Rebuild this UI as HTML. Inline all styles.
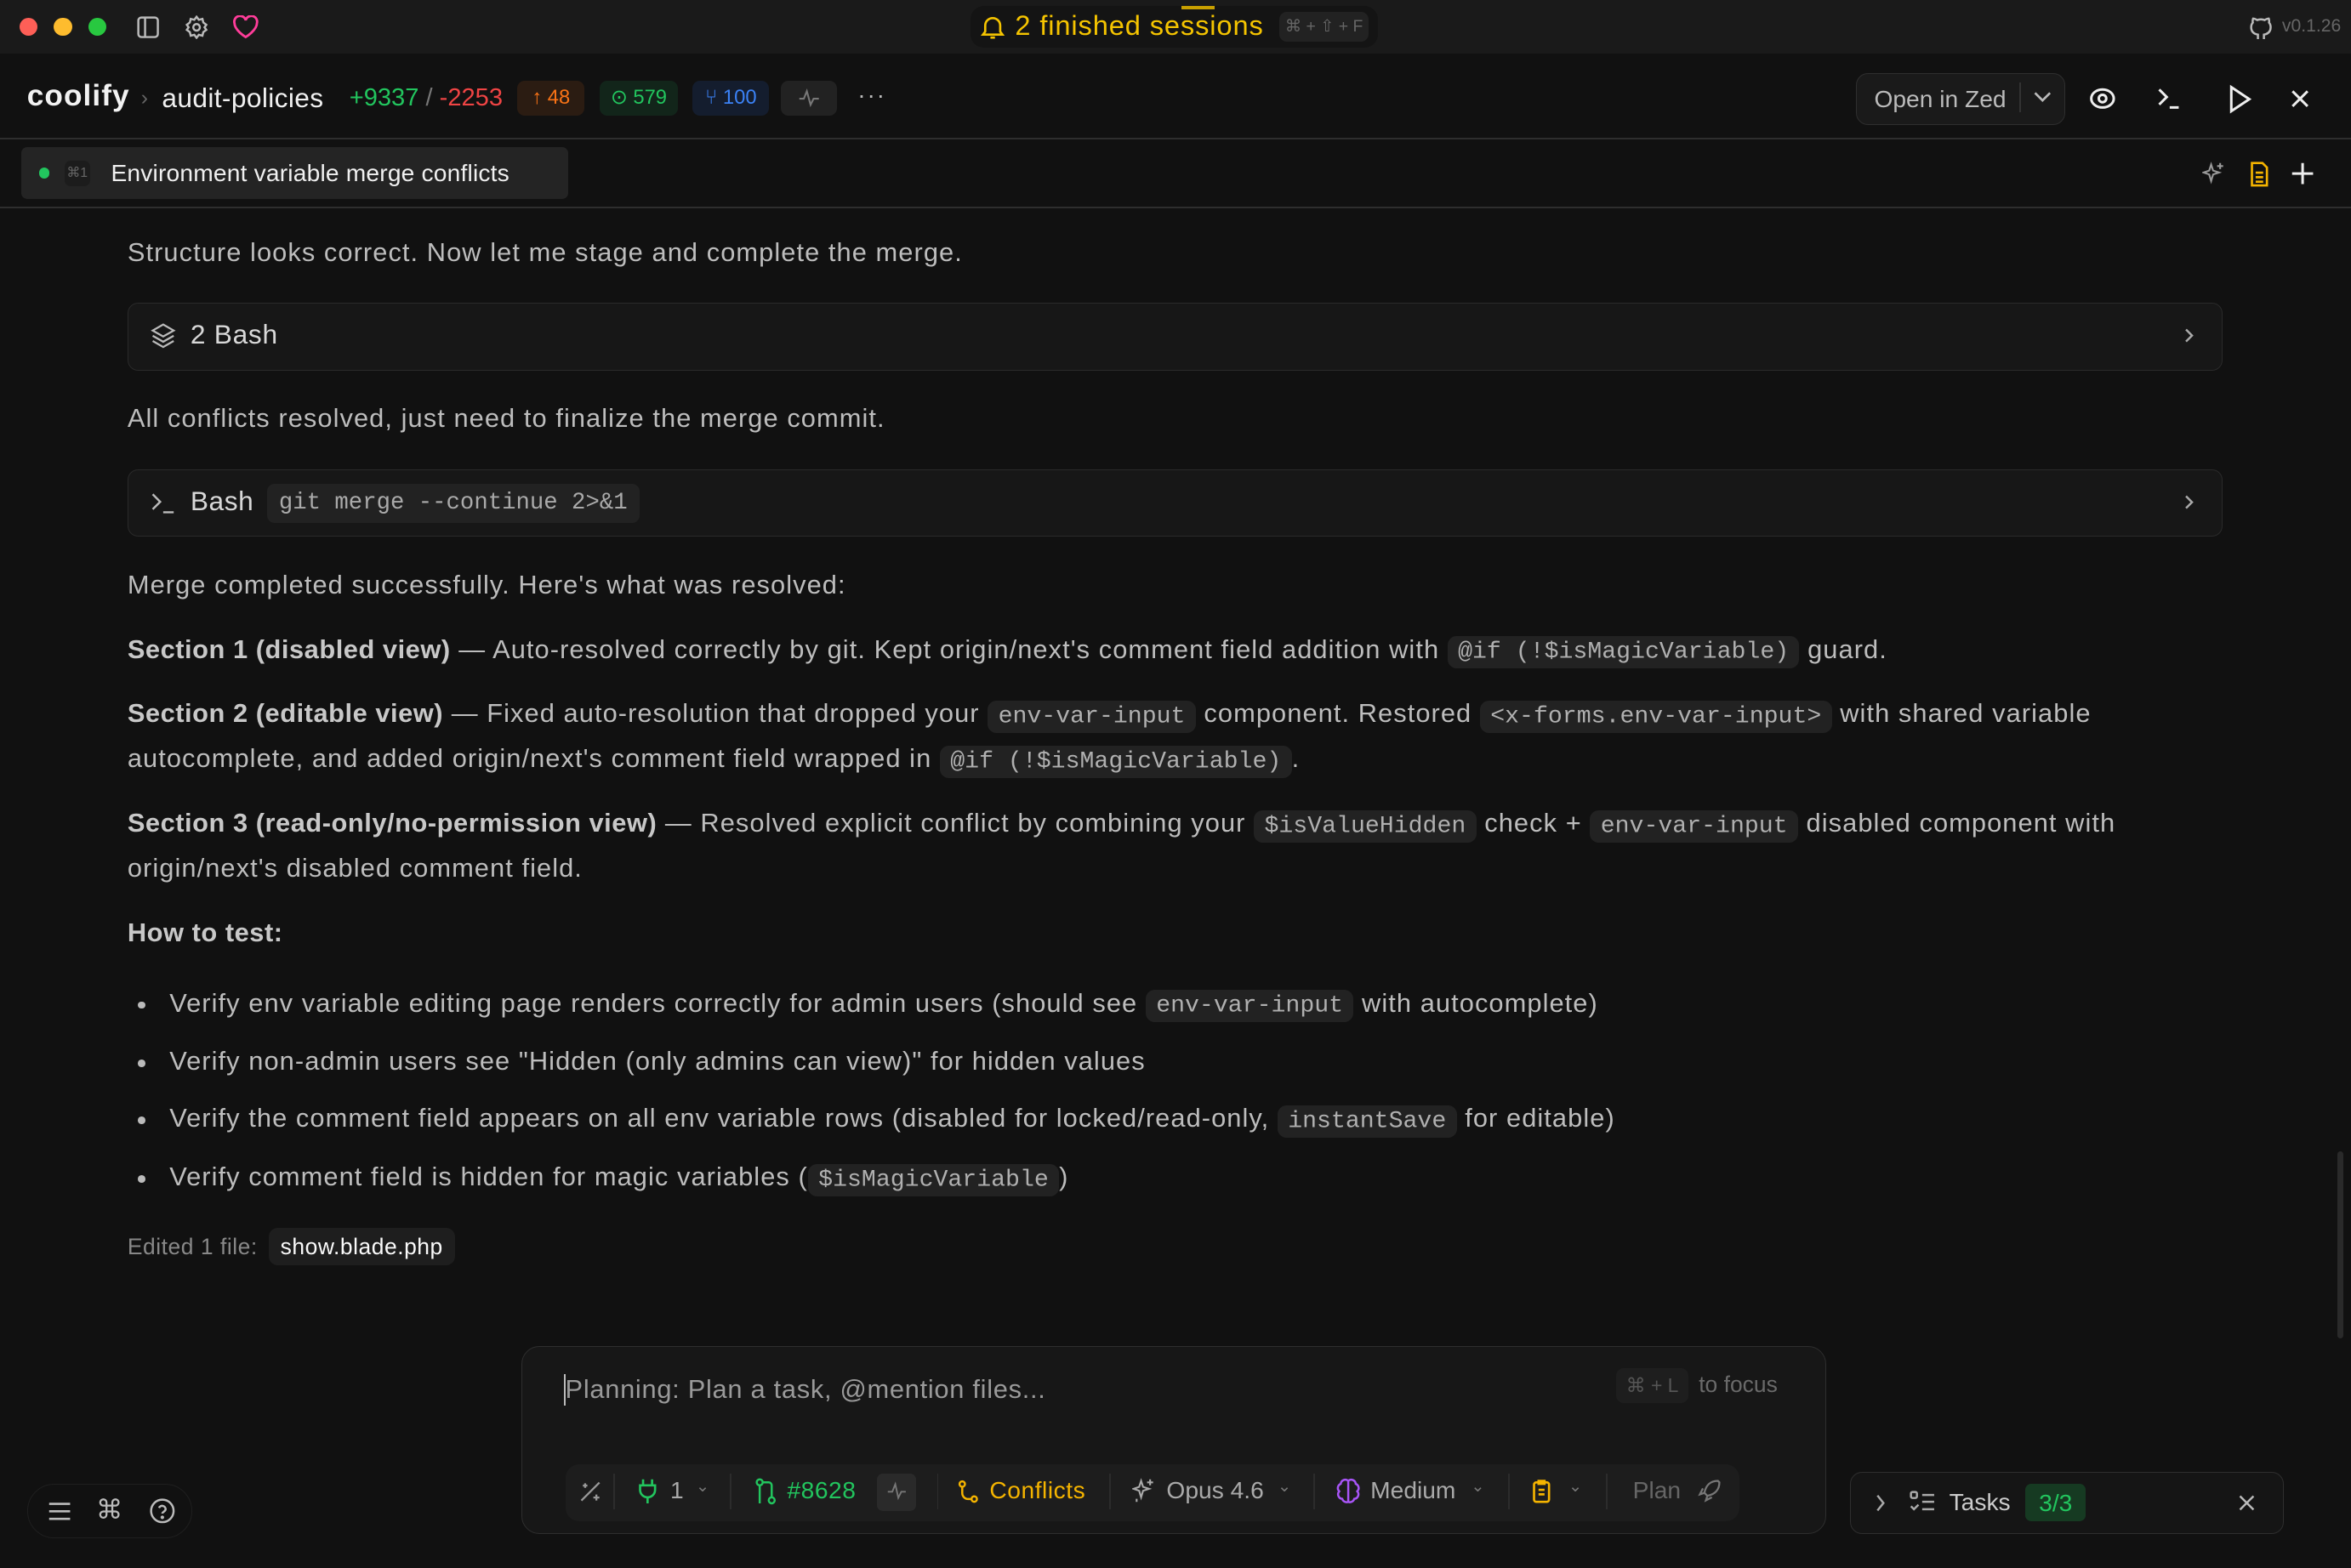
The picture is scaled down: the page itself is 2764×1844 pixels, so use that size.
<!DOCTYPE html>
<html><head><meta charset="utf-8"><style>
html,body{margin:0;padding:0;background:#111;overflow:hidden;width:2764px;height:1844px}
#w{zoom:1.76276;width:1568px;height:1046px;position:relative;font-family:"Liberation Sans",sans-serif;color:#bdbdbd}
.a{position:absolute;white-space:nowrap}
.p{position:absolute;left:85px;font-size:17.5px;color:#bdbdbd;white-space:nowrap;letter-spacing:0.6px}
.p b{color:#c8c8c8;font-weight:bold;letter-spacing:0.3px}
code{font-family:"Liberation Mono",monospace;font-size:16px;background:#222;border-radius:6px;padding:2px 7px;color:#b0b0b0;letter-spacing:0}
.card{position:absolute;left:85px;width:1396px;height:44px;border:1px solid #2a2a2a;border-radius:7px;background:#171717}
.li{position:absolute;left:92px;font-size:17.5px;color:#bdbdbd;white-space:nowrap;letter-spacing:0.6px}
.li::before{content:"";position:absolute;left:0;top:9px;width:5px;height:5px;border-radius:50%;background:#bbb}
.li span.t{margin-left:21px}
</style></head><body><div id="w">
<!-- title bar -->
<div class="a" style="left:0;top:0;width:1568px;height:36px;background:#1a1a1a"></div>
<div class="a" style="left:13px;top:12px;width:12px;height:12px;border-radius:50%;background:#fe5f57"></div>
<div class="a" style="left:36px;top:12px;width:12px;height:12px;border-radius:50%;background:#febc2e"></div>
<div class="a" style="left:59px;top:12px;width:12px;height:12px;border-radius:50%;background:#28c840"></div>
<svg class="a" style="left:91px;top:10px" width="16" height="16" viewBox="0 0 16 16" fill="none" stroke="#bbb" stroke-width="1.4"><rect x="1.5" y="1.5" width="13" height="13" rx="2"/><line x1="6" y1="1.5" x2="6" y2="14.5"/></svg>
<svg class="a" style="left:123px;top:10px" width="16" height="16" viewBox="0 0 16 16" fill="none" stroke="#bbb" stroke-width="1.4"><circle cx="8" cy="8" r="2.2"/><path d="M8 1l1.5 2 2.4-.6.6 2.4 2 1.5-1.2 1.7 1.2 1.7-2 1.5-.6 2.4-2.4-.6L8 15l-1.5-2-2.4.6-.6-2.4-2-1.5L2.7 8 1.5 6.3l2-1.5.6-2.4 2.4.6z"/></svg>
<svg class="a" style="left:155px;top:10px" width="18" height="16" viewBox="0 0 18 16" fill="none" stroke="#ff3d9a" stroke-width="1.6"><path d="M9 14.5S1.5 10 1.5 5.2A3.7 3.7 0 0 1 9 3.3a3.7 3.7 0 0 1 7.5 1.9C16.5 10 9 14.5 9 14.5z"/></svg>
<div class="a" style="left:647px;top:4px;width:272px;height:28px;border-radius:9px;background:#141414"></div>
<div class="a" style="left:788px;top:4px;width:22px;height:2px;background:#c9a000"></div>
<svg class="a" style="left:654px;top:9px" width="16" height="18" viewBox="0 0 16 18" fill="none" stroke="#f5c400" stroke-width="1.5"><path d="M3 12V8a5 5 0 0 1 10 0v4l1.5 2h-13z"/><path d="M6.5 16h3"/></svg>
<div class="a" style="left:677px;top:6px;font-size:18.5px;color:#f5c400;letter-spacing:0.5px">2 finished sessions</div>
<div class="a" style="left:853px;top:8px;width:60px;height:20px;border-radius:5px;background:#222;color:#666;font-size:11px;line-height:20px;text-align:center">⌘ + ⇧ + F</div>
<svg class="a" style="left:1500px;top:9px" width="16" height="18" viewBox="0 0 16 18" fill="none" stroke="#bbb" stroke-width="1.4"><path d="M6 17v-3c-3-.5-4.5-2-4.5-5 0-1.2.4-2.2 1.1-3-.2-.8-.1-1.8.2-2.7 1 0 1.9.5 2.7 1a7 7 0 0 1 5 0c.8-.5 1.7-1 2.7-1 .3.9.4 1.9.2 2.7.7.8 1.1 1.8 1.1 3 0 3-1.5 4.5-4.5 5v3"/></svg>
<div class="a" style="left:1522px;top:11px;font-size:12px;color:#666">v0.1.26</div>
<!-- header -->
<div class="a" style="left:18px;top:53px;font-size:20px;font-weight:bold;color:#f2f2f2;letter-spacing:0.6px">coolify</div>
<div class="a" style="left:94px;top:58px;font-size:14px;color:#666">›</div>
<div class="a" style="left:108px;top:55px;font-size:18px;color:#f0f0f0;letter-spacing:0.2px">audit-policies</div>
<div class="a" style="left:233px;top:56px;font-size:16.5px"><span style="color:#22c55e">+9337</span><span style="color:#777"> / </span><span style="color:#ef4444">-2253</span></div>
<div class="a" style="left:345px;top:54px;width:45px;height:23px;border-radius:5px;background:#2b1c12;color:#f97316;font-size:13.5px;line-height:23px;text-align:center">↑ 48</div>
<div class="a" style="left:400px;top:54px;width:52px;height:23px;border-radius:5px;background:#12251a;color:#22c55e;font-size:13.5px;line-height:23px;text-align:center">⊙ 579</div>
<div class="a" style="left:462px;top:54px;width:51px;height:23px;border-radius:5px;background:#141d2e;color:#3b82f6;font-size:13.5px;line-height:23px;text-align:center">⑂ 100</div>
<div class="a" style="left:521px;top:54px;width:37px;height:23px;border-radius:5px;background:#222"></div>
<svg class="a" style="left:532px;top:58px" width="15" height="15" viewBox="0 0 15 15" fill="none" stroke="#777" stroke-width="1.2"><path d="M1 8h3l2-5 2.5 9 2-4H14"/></svg>
<div class="a" style="left:572px;top:54px;font-size:16px;color:#bbb;letter-spacing:1px">···</div>
<div class="a" style="left:1238px;top:49px;width:138px;height:33px;border:1px solid #2e2e2e;border-radius:8px;background:#1a1a1a"></div>
<div class="a" style="left:1250px;top:57px;font-size:16px;color:#bbb">Open in Zed</div>
<div class="a" style="left:1347px;top:55px;width:1px;height:20px;background:#333"></div>
<svg class="a" style="left:1355px;top:59px" width="14" height="12" viewBox="0 0 14 12" fill="none" stroke="#bbb" stroke-width="1.5"><path d="M2 3l5 5 5-5"/></svg>
<svg class="a" style="left:1393px;top:57px" width="18" height="18" viewBox="0 0 18 18" fill="none" stroke="#eee" stroke-width="1.7"><ellipse cx="9" cy="9" rx="7.5" ry="6"/><circle cx="9" cy="9" r="2.5"/></svg>
<svg class="a" style="left:1438px;top:57px" width="18" height="18" viewBox="0 0 18 18" fill="none" stroke="#eee" stroke-width="1.7"><path d="M2 3l5 5-5 5M9 15h6"/></svg>
<svg class="a" style="left:1485px;top:56px" width="18" height="20" viewBox="0 0 18 20" fill="none" stroke="#eee" stroke-width="1.7"><path d="M3 2l12 8-12 8z"/></svg>
<svg class="a" style="left:1526px;top:58px" width="16" height="16" viewBox="0 0 16 16" fill="none" stroke="#eee" stroke-width="1.7"><path d="M3 3l10 10M13 3L3 13"/></svg>
<div class="a" style="left:0;top:92px;width:1568px;height:1px;background:#2e2e2e"></div>
<!-- tab bar -->
<div class="a" style="left:14px;top:98px;width:365px;height:35px;border-radius:4px;background:#242424"></div>
<div class="a" style="left:26px;top:112px;width:7px;height:7px;border-radius:50%;background:#22c55e"></div>
<div class="a" style="left:43px;top:107px;width:17px;height:17px;border-radius:4px;background:#1c1c1c;color:#666;font-size:9px;line-height:17px;text-align:center">⌘1</div>
<div class="a" style="left:74px;top:106px;font-size:16px;color:#f0f0f0;letter-spacing:0.1px">Environment variable merge conflicts</div>
<svg class="a" style="left:1469px;top:108px" width="16" height="16" viewBox="0 0 16 16" fill="none" stroke="#999" stroke-width="1.2"><path d="M6 2l1.3 4 4 1.3-4 1.3L6 13l-1.3-4.4L1 7.3l3.7-1.3zM12 1v4M10 3h4"/></svg>
<svg class="a" style="left:1500px;top:107px" width="14" height="18" viewBox="0 0 14 18" fill="none" stroke="#f5b400" stroke-width="1.5"><path d="M2 1.5h7l3 3v12H2z"/><path d="M4.5 8h5M4.5 11h5M4.5 14h5"/></svg>
<svg class="a" style="left:1528px;top:108px" width="16" height="16" viewBox="0 0 16 16" fill="none" stroke="#eee" stroke-width="1.7"><path d="M8 1v14M1 8h14"/></svg>
<div class="a" style="left:0;top:138px;width:1568px;height:1px;background:#2e2e2e"></div>
<!-- content -->
<div class="p" style="top:158px">Structure looks correct. Now let me stage and complete the merge.</div>
<div class="card" style="top:202px"></div>
<svg class="a" style="left:100px;top:215px" width="18" height="18" viewBox="0 0 18 18" fill="none" stroke="#bbb" stroke-width="1.3"><path d="M9 1.5l7 4-7 4-7-4z"/><path d="M2 9l7 4 7-4M2 12.5l7 4 7-4"/></svg>
<div class="a" style="left:127px;top:213px;font-size:18px;color:#d8d8d8;letter-spacing:0.4px">2 Bash</div>
<svg class="a" style="left:1454px;top:218px" width="12" height="12" viewBox="0 0 12 12" fill="none" stroke="#aaa" stroke-width="1.4"><path d="M4 2l4 4-4 4"/></svg>
<div class="p" style="top:269px">All conflicts resolved, just need to finalize the merge commit.</div>
<div class="card" style="top:313px"></div>
<svg class="a" style="left:100px;top:327px" width="18" height="18" viewBox="0 0 18 18" fill="none" stroke="#bbb" stroke-width="1.4"><path d="M2 3l5 5-5 5M9 15h7"/></svg>
<div class="a" style="left:127px;top:324px;font-size:18px;color:#d8d8d8;letter-spacing:0.3px">Bash</div>
<div class="a" style="left:178px;top:323px;height:26px;padding:0 8px;border-radius:5px;background:#222;font-family:'Liberation Mono',monospace;font-size:15.5px;line-height:26px;color:#aaa">git merge --continue 2&gt;&amp;1</div>
<svg class="a" style="left:1454px;top:329px" width="12" height="12" viewBox="0 0 12 12" fill="none" stroke="#aaa" stroke-width="1.4"><path d="M4 2l4 4-4 4"/></svg>
<div class="p" style="top:380px">Merge completed successfully. Here's what was resolved:</div>
<div class="p" style="top:423px"><b>Section 1 (disabled view)</b> — Auto-resolved correctly by git. Kept origin/next's comment field addition with <code>@if (!$isMagicVariable)</code> guard.</div>
<div class="p" style="top:466px"><b>Section 2 (editable view)</b> — Fixed auto-resolution that dropped your <code>env-var-input</code> component. Restored <code>&lt;x-forms.env-var-input&gt;</code> with shared variable</div>
<div class="p" style="top:496px">autocomplete, and added origin/next's comment field wrapped in <code>@if (!$isMagicVariable)</code>.</div>
<div class="p" style="top:539px"><b>Section 3 (read-only/no-permission view)</b> — Resolved explicit conflict by combining your <code>$isValueHidden</code> check + <code>env-var-input</code> disabled component with</div>
<div class="p" style="top:569px">origin/next's disabled comment field.</div>
<div class="p" style="top:612px"><b>How to test:</b></div>
<div class="li" style="top:659px"><span class="t">Verify env variable editing page renders correctly for admin users (should see <code>env-var-input</code> with autocomplete)</span></div>
<div class="li" style="top:698px"><span class="t">Verify non-admin users see "Hidden (only admins can view)" for hidden values</span></div>
<div class="li" style="top:736px"><span class="t">Verify the comment field appears on all env variable rows (disabled for locked/read-only, <code>instantSave</code> for editable)</span></div>
<div class="li" style="top:775px"><span class="t">Verify comment field is hidden for magic variables (<code>$isMagicVariable</code>)</span></div>
<div class="a" style="left:85px;top:823px;font-size:15px;color:#888;letter-spacing:0.3px">Edited 1 file:</div>
<div class="a" style="left:179px;top:819px;height:25px;padding:0 8px;border-radius:6px;background:#1e1e1e;font-size:15px;line-height:25px;color:#fafafa;letter-spacing:0.3px">show.blade.php</div>
<!-- scrollbar -->
<div class="a" style="left:1559px;top:768px;width:4px;height:125px;border-radius:2px;background:#2a2a2a"></div>
<!-- input -->
<div class="a" style="left:348px;top:898px;width:869px;height:124px;border:1px solid #2e2e2e;border-radius:12px;background:#171717"></div>
<div class="a" style="left:376px;top:917px;width:1px;height:21px;background:#bbb"></div>
<div class="a" style="left:377px;top:917px;font-size:17.5px;color:#9a9a9a;letter-spacing:0.4px">Planning: Plan a task, @mention files...</div>
<div class="a" style="left:1078px;top:913px;width:48px;height:23px;border-radius:5px;background:#1e1e1e;color:#555;font-size:13px;line-height:23px;text-align:center">⌘ + L</div>
<div class="a" style="left:1133px;top:915px;font-size:15px;color:#6a6a6a">to focus</div>
<div class="a" style="left:377px;top:977px;width:783px;height:38px;border-radius:9px;background:#1d1d1d"></div>
<svg class="a" style="left:386px;top:987px" width="16" height="16" viewBox="0 0 16 16" fill="none" stroke="#999" stroke-width="1.3"><path d="M2 14L14 2M3 4h3M4.5 2.5v3M10 12h4M12 10v4"/></svg>
<div class="a" style="left:409px;top:983px;width:1px;height:24px;background:#2c2c2c"></div>
<svg class="a" style="left:425px;top:986px" width="14" height="18" viewBox="0 0 14 18" fill="none" stroke="#22c55e" stroke-width="1.5"><path d="M4 1v4M10 1v4M2 5h10v3a5 5 0 0 1-10 0zM7 13v4"/></svg>
<div class="a" style="left:447px;top:985px;font-size:16px;color:#aaa">1</div>
<div class="a" style="left:464px;top:985px;font-size:11px;color:#777">⌄</div>
<div class="a" style="left:487px;top:983px;width:1px;height:24px;background:#2c2c2c"></div>
<svg class="a" style="left:503px;top:986px" width="15" height="18" viewBox="0 0 15 18" fill="none" stroke="#22c55e" stroke-width="1.4"><circle cx="3.5" cy="3" r="2"/><circle cx="11.5" cy="15" r="2"/><path d="M3.5 5v12M6 3h3.5a2 2 0 0 1 2 2v8"/></svg>
<div class="a" style="left:525px;top:985px;font-size:16px;color:#22c55e;letter-spacing:0.3px">#8628</div>
<div class="a" style="left:585px;top:983px;width:26px;height:25px;border-radius:4px;background:#2a2a2a"></div>
<svg class="a" style="left:591px;top:988px" width="14" height="14" viewBox="0 0 14 14" fill="none" stroke="#777" stroke-width="1.1"><path d="M1 7h3l2-5 2 9 2-4h3"/></svg>
<div class="a" style="left:625px;top:983px;width:1px;height:24px;background:#2c2c2c"></div>
<svg class="a" style="left:639px;top:987px" width="14" height="16" viewBox="0 0 14 16" fill="none" stroke="#f5b400" stroke-width="1.4"><circle cx="3" cy="3" r="1.8"/><circle cx="11" cy="13" r="1.8"/><path d="M3 5v4a4 4 0 0 0 4 4h2"/></svg>
<div class="a" style="left:660px;top:985px;font-size:16px;color:#f5b400;letter-spacing:0.3px">Conflicts</div>
<div class="a" style="left:740px;top:983px;width:1px;height:24px;background:#2c2c2c"></div>
<svg class="a" style="left:755px;top:986px" width="16" height="17" viewBox="0 0 16 17" fill="none" stroke="#aaa" stroke-width="1.2"><path d="M6 2l1.3 4 4 1.3-4 1.3L6 13l-1.3-4.4L1 7.3l3.7-1.3zM12 1v4M10 3h4M3 14v2"/></svg>
<div class="a" style="left:778px;top:985px;font-size:16px;color:#aaa">Opus 4.6</div>
<div class="a" style="left:852px;top:985px;font-size:11px;color:#777">⌄</div>
<div class="a" style="left:876px;top:983px;width:1px;height:24px;background:#2c2c2c"></div>
<svg class="a" style="left:891px;top:986px" width="16" height="18" viewBox="0 0 16 18" fill="none" stroke="#a855f7" stroke-width="1.4"><path d="M8 2a3 3 0 0 0-5 2 3 3 0 0 0-1 5 3 3 0 0 0 2 5 3 3 0 0 0 4 2 3 3 0 0 0 4-2 3 3 0 0 0 2-5 3 3 0 0 0-1-5 3 3 0 0 0-5-2zM8 2v14"/></svg>
<div class="a" style="left:914px;top:985px;font-size:16px;color:#aaa">Medium</div>
<div class="a" style="left:981px;top:985px;font-size:11px;color:#777">⌄</div>
<div class="a" style="left:1006px;top:983px;width:1px;height:24px;background:#2c2c2c"></div>
<svg class="a" style="left:1021px;top:986px" width="14" height="18" viewBox="0 0 14 18" fill="none" stroke="#f5b400" stroke-width="1.5"><rect x="2" y="3" width="10" height="13" rx="1.5"/><path d="M5 2h4v2H5zM5 8h4M5 11h4"/></svg>
<div class="a" style="left:1046px;top:985px;font-size:11px;color:#777">⌄</div>
<div class="a" style="left:1071px;top:983px;width:1px;height:24px;background:#2c2c2c"></div>
<div class="a" style="left:1089px;top:985px;font-size:16px;color:#666">Plan</div>
<svg class="a" style="left:1132px;top:986px" width="16" height="17" viewBox="0 0 16 17" fill="none" stroke="#777" stroke-width="1.3"><path d="M14 2c-5 0-8 3-9 8l2 2c5-1 8-4 8-9zM5 10l-3 1 2-4M7 12l-1 3 4-2"/></svg>
<!-- tasks -->
<div class="a" style="left:1234px;top:982px;width:288px;height:40px;border:1px solid #2e2e2e;border-radius:8px;background:#151515"></div>
<svg class="a" style="left:1249px;top:997px" width="10" height="12" viewBox="0 0 10 12" fill="none" stroke="#aaa" stroke-width="1.4"><path d="M3 1l4 5-4 5"/></svg>
<svg class="a" style="left:1273px;top:994px" width="18" height="17" viewBox="0 0 18 17" fill="none" stroke="#aaa" stroke-width="1.4"><rect x="1.5" y="1.5" width="4" height="4" rx="1"/><path d="M1.5 11l2 2 3-3M9 3.5h8M9 8h8M9 13h8"/></svg>
<div class="a" style="left:1300px;top:993px;font-size:16px;color:#ccc">Tasks</div>
<div class="a" style="left:1351px;top:990px;width:40px;height:25px;border-radius:4px;background:#163a22;color:#22c55e;font-size:16px;line-height:25px;text-align:center">3/3</div>
<svg class="a" style="left:1492px;top:996px" width="13" height="13" viewBox="0 0 13 13" fill="none" stroke="#bbb" stroke-width="1.4"><path d="M2 2l9 9M11 2l-9 9"/></svg>
<!-- bottom left -->
<div class="a" style="left:18px;top:990px;width:110px;height:36px;border-radius:18px;border:1px solid #1f1f1f;box-sizing:border-box;background:#111"></div>
<svg class="a" style="left:32px;top:1001px" width="16" height="14" viewBox="0 0 16 14" fill="none" stroke="#bbb" stroke-width="1.5"><path d="M1 2h14M1 7h14M1 12h14"/></svg>
<div class="a" style="left:64px;top:997px;font-size:18px;color:#bbb">⌘</div>
<svg class="a" style="left:99px;top:999px" width="18" height="18" viewBox="0 0 18 18" fill="none" stroke="#bbb" stroke-width="1.4"><circle cx="9" cy="9" r="7.5"/><path d="M6.8 7a2.3 2.3 0 0 1 4.4.8c0 1.5-2.2 1.8-2.2 3"/><circle cx="9" cy="13.3" r=".5" fill="#bbb"/></svg>
</div></body></html>
